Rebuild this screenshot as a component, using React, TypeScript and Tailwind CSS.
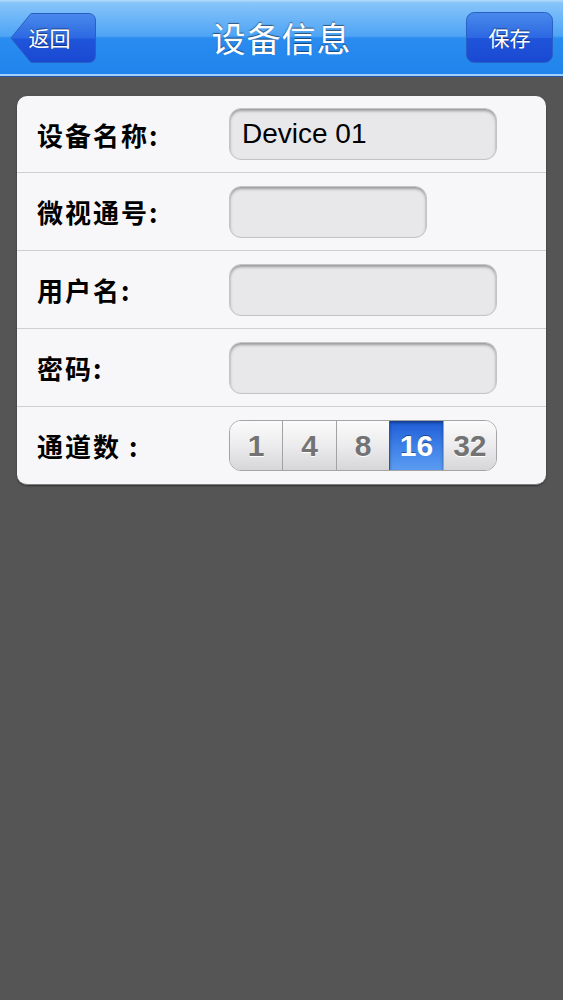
const rows = [
  { label: "设备名称:", value: "Device 01", width: "w-[268px]" },
  { label: "微视通号:", value: "", width: "w-[198px]" },
  { label: "用户名:", value: "", width: "w-[268px]" },
  { label: "密码:", value: "", width: "w-[268px]" },
];

const channels = ["1", "4", "8", "16", "32"];

const NavButton = ({ text, back }: { text: string; back?: boolean }) => (
  <div className="relative w-[87px] h-[52px] flex items-center justify-center">
    <svg className="absolute inset-0" width="87" height="52" viewBox="0 0 87 52">
      <defs>
        <linearGradient id={back ? "gb" : "gs"} x1="0" y1="0" x2="0" y2="1">
          <stop offset="0" stopColor="#4a8aec" />
          <stop offset="0.5" stopColor="#2c68e2" />
          <stop offset="0.52" stopColor="#1f55da" />
          <stop offset="1" stopColor="#1a48d2" />
        </linearGradient>
      </defs>
      {back ? (
        <path
          d="M1 26 L21 1.5 H78 Q85.5 1.5 85.5 9 V43 Q85.5 50.5 78 50.5 H21 Z"
          fill="url(#gb)"
          stroke="#2a5fc4"
          strokeWidth="1"
        />
      ) : (
        <rect x="0.5" y="0.5" width="86" height="50" rx="8" fill="url(#gs)" stroke="#2a5fc4" strokeWidth="1" />
      )}
    </svg>
    <span
      className={`relative text-white text-[21px] ${back ? "pr-[8px]" : ""} [text-shadow:0_-1px_1px_rgba(0,0,0,0.45)]`}
      style={{ fontFamily: '"Noto Sans CJK SC", sans-serif' }}
    >
      {text}
    </span>
  </div>
);

export default function App() {
  return (
    <div className="min-h-[1000px] bg-[#555555]" style={{ fontFamily: '"Noto Sans CJK SC", sans-serif' }}>
      <div className="h-[76px] bg-[linear-gradient(#b4dafc_0px,#86c4fa_3px,#4ea4f5_36px,#2b8cf0_38px,#1f84ec_72px)] border-b-[2px] border-[#a3d0f8] shadow-[0_1px_0_#1e5aa8]">
        <div className="grid grid-cols-[87px_1fr_87px] items-center px-[10px] pt-[12px]">
          <NavButton text="返回" back />
          <h1 className="text-center text-white text-[34px] leading-[52px] tracking-[1px] [text-shadow:0_-1px_1px_rgba(0,0,0,0.5)]">
            设备信息
          </h1>
          <NavButton text="保存" />
        </div>
      </div>

      <div className="mx-[17px] mt-[20px] bg-[#f7f7f9] rounded-[10px] border-b border-[#7e7e7e] shadow-[0_1px_2px_rgba(0,0,0,0.45)]">
        {rows.map((r, i) => (
          <div
            key={r.label}
            className={`flex items-center ${i > 0 ? "h-[78px] border-t border-[#cfcfd2]" : "h-[76px]"}`}
          >
            <div className="w-[212px] pl-[20px] text-[26px] font-semibold text-black tracking-[2px]">
              {r.label}
            </div>
            <div
              className={`${r.width} h-[52px] rounded-[12px] bg-[#e8e8ea] border border-[#c4c4c6] shadow-[inset_0_2px_3px_rgba(0,0,0,0.35)] flex items-center px-[12px] text-[28px] text-black`}
              style={{ fontFamily: '"Liberation Sans", Arial, sans-serif' }}
            >
              {r.value}
            </div>
          </div>
        ))}
        <div className="h-[78px] flex items-center border-t border-[#cfcfd2]">
          <div className="w-[212px] pl-[20px] text-[26px] font-semibold text-black tracking-[2px]">通道数 :</div>
          <div
            className="w-[268px] h-[51px] rounded-[12px] overflow-hidden border border-[#a4a4a6] flex"
            style={{ fontFamily: '"Liberation Sans", Arial, sans-serif' }}
          >
            {channels.map((c, i) =>
              c === "16" ? (
                <div
                  key={c}
                  className="flex-1 flex items-center justify-center bg-[linear-gradient(#1f5cd6,#3c7fe6_50%,#5b9cf2)] text-white text-[30px] font-bold shadow-[inset_0_2px_3px_rgba(0,0,0,0.35)] [text-shadow:0_-1px_0_rgba(0,0,0,0.4)] border-l border-[#2a56b0]"
                >
                  {c}
                </div>
              ) : (
                <div
                  key={c}
                  className={`flex-1 flex items-center justify-center bg-[linear-gradient(#fbfbfb,#ececee_50%,#d6d6d8)] text-[#737373] text-[30px] font-bold [text-shadow:0_1px_0_#ffffff] ${i > 0 ? "border-l border-[#a2a2a4]" : ""}`}
                >
                  {c}
                </div>
              )
            )}
          </div>
        </div>
      </div>
    </div>
  );
}
